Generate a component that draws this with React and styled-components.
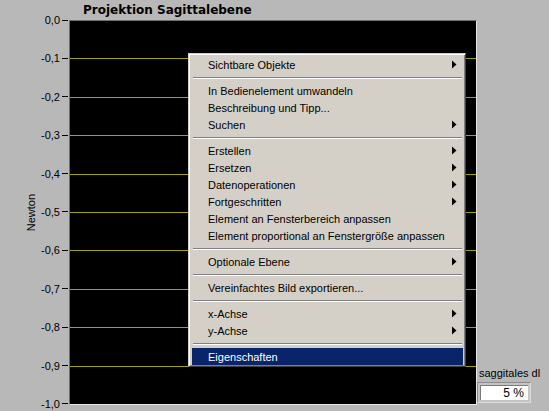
import React from "react";
import styled, { createGlobalStyle } from "styled-components";

const Global = createGlobalStyle`
  html, body { margin: 0; padding: 0; background: #b8b8b8; }
  body { font-family: "Liberation Sans", Arial, sans-serif; font-size: 11px; color: #000; }
`;

const Page = styled.div`
  position: relative;
  width: 549px;
  height: 411px;
  background: #b8b8b8;
  display: flex;
  overflow: hidden;
`;

const GraphPanel = styled.div`
  display: flex;
  flex-direction: column;
  width: 477px;
`;

const Title = styled.div`
  height: 20px;
  padding-left: 83px;
  font-family: "DejaVu Sans", Verdana, sans-serif;
  font-weight: bold;
  font-size: 12px;
  line-height: 21px;
  box-sizing: border-box;
`;

const Body = styled.div`
  display: flex;
  align-items: flex-start;
`;

const YTitle = styled.div`
  width: 38px;
  height: 385px;
  box-sizing: border-box;
  padding-left: 24px;
  display: flex;
  align-items: center;
  justify-content: center;
`;

const YTitleText = styled.span`
  writing-mode: vertical-rl;
  transform: rotate(180deg);
  line-height: 13px;
`;

const Ticks = styled.div`
  width: 31px;
  height: 398px;
  margin-top: -7px;
  display: flex;
  flex-direction: column;
  justify-content: space-between;
`;

const TickRow = styled.div`
  height: 14px;
  display: flex;
  align-items: center;
  justify-content: flex-end;
  gap: 2px;
  padding-right: 1px;
  line-height: 14px;
`;

const TickMark = styled.span`
  width: 6px;
  height: 1px;
  background: #000;
`;

const Plot = styled.div`
  width: 408px;
  height: 385px;
  box-sizing: border-box;
  background: #000;
  border-top: 1px solid #6e6e6e;
  border-left: 1px solid #6e6e6e;
  border-right: 1px solid #e6e6e6;
  border-bottom: 1px solid #e6e6e6;
  svg { display: block; }
`;

const SideColumn = styled.div`
  flex: 1;
  display: flex;
  flex-direction: column;
  justify-content: flex-end;
  padding-bottom: 8px;
`;

const ControlLabel = styled.div`
  margin-left: 2px;
  margin-bottom: 2px;
  line-height: 14px;
  font-size: 11px;
`;

const NumBox = styled.div`
  width: 54px;
  height: 21px;
  box-sizing: border-box;
  background: #c4c4c4;
  border-top: 1px solid #8c8c8c;
  border-left: 1px solid #8c8c8c;
  border-right: 1px solid #dcdcdc;
  border-bottom: 1px solid #dcdcdc;
  padding: 2px;
  display: flex;
`;

const NumField = styled.div`
  flex: 1;
  background: #fff;
  border-top: 1px solid #7a7a7a;
  border-left: 1px solid #7a7a7a;
  text-align: right;
  padding-right: 4px;
  font-size: 12px;
  line-height: 14px;
`;

const Menu = styled.div`
  position: absolute;
  left: 188px;
  top: 53px;
  width: 278px;
  box-sizing: border-box;
  background: #d4d0c8;
  border-top: 1px solid #d4d0c8;
  border-left: 1px solid #d4d0c8;
  border-right: 1px solid #404040;
  border-bottom: 1px solid #404040;
  box-shadow: inset 1px 1px 0 #ffffff, inset -1px -1px 0 #808080;
  padding: 2px 2px 1px 3px;
  display: flex;
  flex-direction: column;
`;

const Item = styled.div`
  height: 17px;
  display: flex;
  align-items: center;
  padding-left: 16px;
  padding-right: 6px;
  background: ${(p) => (p.$active ? "#0a246a" : "transparent")};
  color: ${(p) => (p.$active ? "#fff" : "#000")};
  white-space: nowrap;
`;

const ItemLabel = styled.span`
  flex: 1;
`;

const Separator = styled.div`
  height: 9px;
  display: flex;
  align-items: center;
  padding: 0 1px;
  &::before {
    content: "";
    flex: 1;
    height: 0;
    border-top: 1px solid #808080;
    border-bottom: 1px solid #ffffff;
  }
`;

const Arrow = () => (
  <svg width="5" height="9" viewBox="0 0 5 9">
    <polygon points="0,0.5 4.5,4.5 0,8.5" fill="#000" />
  </svg>
);

const labels = ["0,0", "-0,1", "-0,2", "-0,3", "-0,4", "-0,5", "-0,6", "-0,7", "-0,8", "-0,9", "-1,0"];

const menu = [
  { t: "Sichtbare Objekte", sub: true },
  "sep",
  { t: "In Bedienelement umwandeln" },
  { t: "Beschreibung und Tipp..." },
  { t: "Suchen", sub: true },
  "sep",
  { t: "Erstellen", sub: true },
  { t: "Ersetzen", sub: true },
  { t: "Datenoperationen", sub: true },
  { t: "Fortgeschritten", sub: true },
  { t: "Element an Fensterbereich anpassen" },
  { t: "Element proportional an Fenstergröße anpassen" },
  "sep",
  { t: "Optionale Ebene", sub: true },
  "sep",
  { t: "Vereinfachtes Bild exportieren..." },
  "sep",
  { t: "x-Achse", sub: true },
  { t: "y-Achse", sub: true },
  "sep",
  { t: "Eigenschaften", active: true },
];

export default function App() {
  const gridYs = [1, 2, 3, 4, 5, 6, 7, 8, 9].map((k) => Math.round(38.4 * k) - 0.5);
  return (
    <>
      <Global />
      <Page>
        <GraphPanel>
          <Title>Projektion Sagittalebene</Title>
          <Body>
            <YTitle>
              <YTitleText>Newton</YTitleText>
            </YTitle>
            <Ticks>
              {labels.map((l) => (
                <TickRow key={l}>
                  <span>{l}</span>
                  <TickMark />
                </TickRow>
              ))}
            </Ticks>
            <Plot>
              <svg width="406" height="383">
                {gridYs.map((y) => (
                  <line key={y} x1="0" x2="406" y1={y} y2={y} stroke="#a3a300" strokeWidth="1" />
                ))}
              </svg>
            </Plot>
          </Body>
        </GraphPanel>
        <SideColumn>
          <ControlLabel>saggitales dl</ControlLabel>
          <NumBox>
            <NumField>5 %</NumField>
          </NumBox>
        </SideColumn>
        <Menu>
          {menu.map((m, i) =>
            m === "sep" ? (
              <Separator key={i} />
            ) : (
              <Item key={i} $active={m.active}>
                <ItemLabel>{m.t}</ItemLabel>
                {m.sub && <Arrow />}
              </Item>
            )
          )}
        </Menu>
      </Page>
    </>
  );
}
